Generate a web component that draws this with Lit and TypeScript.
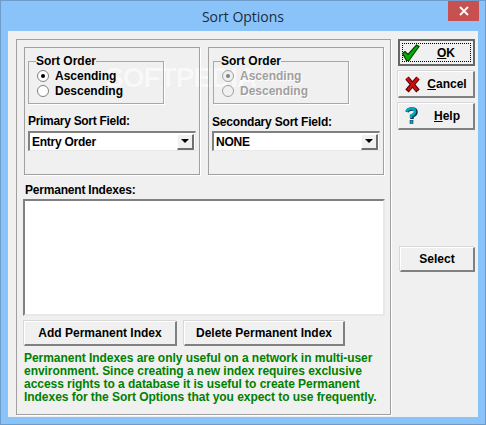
import { LitElement, html, css } from "lit";
import { customElement } from "lit/decorators.js";

const checkIcon = html`<svg class="icon check" width="18" height="18" viewBox="0 0 18 18">
  <path d="M0.5 9.5 L3 7.5 L6 10.5 L14.5 1 L17 2.5 L7 16.5 L4.5 16.5 Z" fill="#00b000" stroke="#003c00" stroke-width="1.2" />
</svg>`;

const crossIcon = html`<svg class="icon" width="18" height="18" viewBox="0 0 18 18">
  <path d="M4 3 L15 16 M15 3 L4 16" fill="none" stroke="#5a0000" stroke-width="4.5" />
  <path d="M4 3 L14 15 M15 3 L5 15" fill="none" stroke="#d01010" stroke-width="2.5" />
</svg>`;

const helpIcon = html`<svg class="icon help" width="18" height="18" viewBox="0 0 18 18">
  <path d="M5 5 Q6 2 10 2 Q14 2 14 5 Q14 8 10 9 L10 12" fill="none" stroke="#003850" stroke-width="3.5" />
  <path d="M4.5 4.5 Q6 1.5 9.5 1.5 Q13 1.5 13 4.5 Q13 7 9 8.5 L9 11" fill="none" stroke="#00a8c0" stroke-width="2.5" />
  <rect x="8" y="13.5" width="3" height="3" fill="#00a8c0" stroke="#003850" stroke-width="0.6" />
</svg>`;

@customElement("app-root")
export class AppRoot extends LitElement {
  static override styles = css`
    :host {
      display: block;
      width: 486px;
      height: 425px;
      box-sizing: border-box;
      border: 1px solid #6d9ccb;
      background: #8ac3f9;
      font-family: "Liberation Sans", Arial, sans-serif;
      font-size: 12px;
      font-weight: bold;
      color: #000;
      overflow: hidden;
    }

    .titlebar {
      height: 30px;
      display: grid;
      grid-template-columns: 1fr auto 1fr;
      align-items: center;
    }

    .title {
      grid-column: 2;
      font-family: "Open Sans", "Noto Sans", sans-serif;
      font-size: 14px;
      font-weight: 400;
      color: #1c2c3c;
      margin-top: 1px;
    }

    .close {
      grid-column: 3;
      justify-self: end;
      align-self: start;
      width: 31px;
      height: 20px;
      margin-right: 6px;
      background: #c75050;
      display: flex;
      align-items: center;
      justify-content: center;
    }

    .client {
      height: 386px;
      margin: 0 7px;
      box-sizing: border-box;
      padding: 8px 3px 2px 8px;
      background: #f0f0f0;
      display: flex;
      gap: 7px;
    }

    .panel {
      position: relative;
      width: 375px;
      box-sizing: border-box;
      padding: 7px;
      border: 1px solid #a0a0a0;
      box-shadow: 1px 1px 0 #fff;
    }

    .watermark {
      position: absolute;
      left: 88px;
      top: 22px;
      font-size: 28px;
      letter-spacing: -1px;
      color: rgba(255, 255, 255, 0.75);
      text-shadow: 0 0 1px #e6e6e6;
      pointer-events: none;
    }

    .groups {
      position: relative;
      display: flex;
      gap: 8px;
    }

    .group {
      width: 176px;
      height: 128px;
      box-sizing: border-box;
      padding: 7px 3px 0 3px;
      border: 1px solid #a0a0a0;
      box-shadow: 1px 1px 0 #fff;
    }

    fieldset {
      width: 136px;
      height: 49px;
      box-sizing: border-box;
      margin: 0;
      padding: 0 0 0 8px;
      border: 1px solid #a8a8a8;
      box-shadow: 1px 1px 0 #fff;
    }

    legend {
      margin-left: -1px;
      padding: 0;
      line-height: 13px;
    }

    .second fieldset {
      margin-left: 1px;
    }

    .radio {
      display: flex;
      align-items: center;
      gap: 6px;
      height: 15px;
    }

    .dot {
      width: 12px;
      height: 12px;
      box-sizing: border-box;
      border-radius: 50%;
      border: 1px solid #808080;
      background: #fff;
      display: flex;
      align-items: center;
      justify-content: center;
    }

    .dot.on::after {
      content: "";
      width: 4px;
      height: 4px;
      border-radius: 50%;
      background: #000;
    }

    .disabled .dot {
      background: #f0f0f0;
      border-color: #a0a0a0;
    }

    .disabled .dot.on::after {
      background: #808080;
    }

    .disabled .radio {
      color: #a0a0a0;
      text-shadow: 1px 1px 0 #fff;
    }

    .field-label {
      margin-top: 11px;
      line-height: 13px;
      letter-spacing: -0.3px;
    }

    .second .field-label {
      margin-top: 12px;
      letter-spacing: -0.2px;
    }

    .combo {
      height: 20px;
      width: 168px;
      margin-top: 3px;
      box-sizing: border-box;
      border: 2px solid #808080;
      border-right: 1px solid #e8e8e8;
      border-bottom: 1px solid #e8e8e8;
      background: #fff;
      display: flex;
      align-items: center;
      justify-content: space-between;
      padding-left: 2px;
      letter-spacing: -0.25px;
    }

    .second .combo {
      margin-top: 2px;
    }

    .arrow {
      width: 17px;
      height: 16px;
      margin-right: 1px;
      box-sizing: border-box;
      background: #f0f0f0;
      border: 1px solid #fff;
      border-right: 2px solid #707070;
      border-bottom: 2px solid #707070;
      display: flex;
      align-items: center;
      justify-content: center;
    }

    .arrow::after {
      content: "";
      border-left: 4px solid transparent;
      border-right: 4px solid transparent;
      border-top: 4px solid #000;
    }

    .list-label {
      margin-top: 9px;
      margin-left: 1px;
      line-height: 13px;
      letter-spacing: -0.2px;
    }

    .list {
      height: 117px;
      width: 362px;
      margin-top: 2px;
      margin-left: -1px;
      box-sizing: border-box;
      background: #fff;
      border: 2px solid #808080;
      border-right: 2px solid #e8e8e8;
      border-bottom: 2px solid #e8e8e8;
    }

    .actions {
      display: flex;
      gap: 7px;
      margin-top: 5px;
    }

    button {
      font: inherit;
      color: inherit;
      height: 25px;
      padding: 0;
      box-sizing: border-box;
      background: #f0f0f0;
      border: 1px solid #fff;
      border-right: 2px solid #808080;
      border-bottom: 2px solid #808080;
      box-shadow: -1px -1px 0 #d8d8d8;
      display: flex;
      align-items: center;
      justify-content: center;
    }

    .add {
      width: 153px;
    }

    .delete {
      width: 161px;
    }

    .note {
      margin: 6px 0 0;
      color: #008000;
      line-height: 13px;
      letter-spacing: -0.04px;
      white-space: nowrap;
    }

    .side {
      width: 77px;
      display: flex;
      flex-direction: column;
      gap: 5px;
    }

    .side-btn {
      height: 27px;
      width: 77px;
      justify-content: flex-start;
      padding-left: 4px;
    }

    .side-btn .label {
      flex: 1;
      text-align: center;
    }

    .icon {
      flex: none;
      width: 18px;
      height: 18px;
    }

    .icon.check {
      margin-left: -2px;
      margin-right: 2px;
    }

    .icon.help {
      margin-left: -1px;
      margin-right: 1px;
    }

    .default {
      border: 2px solid #666;
      box-shadow: none;
      padding: 2px;
    }

    .focus {
      flex: 1;
      height: 100%;
      box-sizing: border-box;
      border: 1px dotted #000;
      display: flex;
      align-items: center;
      padding-left: 1px;
    }

    .select {
      width: 75px;
      margin-top: 112px;
      margin-left: 2px;
    }
  `;

  private sortBox() {
    return html`
      <fieldset>
        <legend>Sort Order</legend>
        <div class="radio"><span class="dot on"></span>Ascending</div>
        <div class="radio"><span class="dot"></span>Descending</div>
      </fieldset>
    `;
  }

  private combo(value: string) {
    return html`<div class="combo"><span>${value}</span><span class="arrow"></span></div>`;
  }

  override render() {
    return html`
      <div class="titlebar">
        <span class="title">Sort Options</span>
        <span class="close">
          <svg width="10" height="10" viewBox="0 0 10 10">
            <path d="M1 1 L9 9 M9 1 L1 9" stroke="#fff" stroke-width="1.8" />
          </svg>
        </span>
      </div>
      <div class="client">
        <div class="panel">
          <div class="watermark">SOFTPEDIA</div>
          <div class="groups">
            <div class="group first">
              ${this.sortBox()}
              <div class="field-label">Primary Sort Field:</div>
              ${this.combo("Entry Order")}
            </div>
            <div class="group second">
              <div class="disabled">${this.sortBox()}</div>
              <div class="field-label">Secondary Sort Field:</div>
              ${this.combo("NONE")}
            </div>
          </div>
          <div class="list-label">Permanent Indexes:</div>
          <div class="list"></div>
          <div class="actions">
            <button class="add">Add Permanent Index</button>
            <button class="delete">Delete Permanent Index</button>
          </div>
          <p class="note">
            Permanent Indexes are only useful on a network in multi-user<br />
            environment. Since creating a new index requires exclusive<br />
            access rights to a database it is useful to create Permanent<br />
            Indexes for the Sort Options that you expect to use frequently.
          </p>
        </div>
        <div class="side">
          <button class="side-btn default">
            <span class="focus">${checkIcon}<span class="label"><u>O</u>K</span></span>
          </button>
          <button class="side-btn">${crossIcon}<span class="label"><u>C</u>ancel</span></button>
          <button class="side-btn">${helpIcon}<span class="label"><u>H</u>elp</span></button>
          <button class="select">Select</button>
        </div>
      </div>
    `;
  }
}
